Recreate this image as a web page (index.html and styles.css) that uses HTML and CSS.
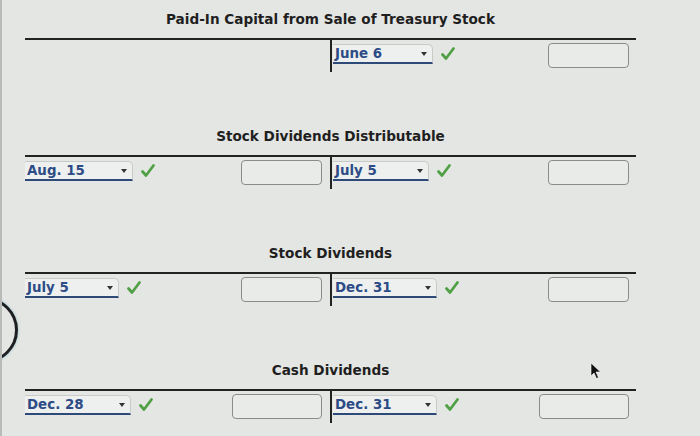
FILE: index.html
```html
<!DOCTYPE html>
<html>
<head>
<meta charset="utf-8">
<link rel="stylesheet" href="styles.css">
</head>
<body>
<div class="page">
  <section class="acct">
    <div class="title">Paid-In Capital from Sale of Treasury Stock</div>
    <div class="t">
      <div class="col left"></div>
      <div class="col right">
        <div class="entry">
          <div class="sel w100">June 6<span class="arr"></span></div>
          <svg class="chk" viewBox="0 0 14 14"><path d="M1.5 7.5 L5 11.5 L12.5 1.5"/></svg>
        </div>
        <div class="box"></div>
      </div>
    </div>
  </section>

  <section class="acct">
    <div class="title">Stock Dividends Distributable</div>
    <div class="t">
      <div class="col left">
        <div class="entry">
          <div class="sel w108">Aug. 15<span class="arr"></span></div>
          <svg class="chk" viewBox="0 0 14 14"><path d="M1.5 7.5 L5 11.5 L12.5 1.5"/></svg>
        </div>
        <div class="box"></div>
      </div>
      <div class="col right">
        <div class="entry">
          <div class="sel w96">July 5<span class="arr"></span></div>
          <svg class="chk" viewBox="0 0 14 14"><path d="M1.5 7.5 L5 11.5 L12.5 1.5"/></svg>
        </div>
        <div class="box"></div>
      </div>
    </div>
  </section>

  <section class="acct">
    <div class="title">Stock Dividends</div>
    <div class="t">
      <div class="col left">
        <div class="entry">
          <div class="sel w94">July 5<span class="arr"></span></div>
          <svg class="chk" viewBox="0 0 14 14"><path d="M1.5 7.5 L5 11.5 L12.5 1.5"/></svg>
        </div>
        <div class="box"></div>
      </div>
      <div class="col right">
        <div class="entry">
          <div class="sel w104">Dec. 31<span class="arr"></span></div>
          <svg class="chk" viewBox="0 0 14 14"><path d="M1.5 7.5 L5 11.5 L12.5 1.5"/></svg>
        </div>
        <div class="box"></div>
      </div>
    </div>
  </section>

  <section class="acct">
    <div class="title">Cash Dividends</div>
    <div class="t">
      <div class="col left">
        <div class="entry">
          <div class="sel w106">Dec. 28<span class="arr"></span></div>
          <svg class="chk" viewBox="0 0 14 14"><path d="M1.5 7.5 L5 11.5 L12.5 1.5"/></svg>
        </div>
        <div class="box wide"></div>
      </div>
      <div class="col right">
        <div class="entry">
          <div class="sel w104">Dec. 31<span class="arr"></span></div>
          <svg class="chk" viewBox="0 0 14 14"><path d="M1.5 7.5 L5 11.5 L12.5 1.5"/></svg>
        </div>
        <div class="box wide"></div>
      </div>
    </div>
  </section>
</div>
<div class="ring"></div>
<svg class="cursor" viewBox="0 0 12 18"><path d="M1 1 L1 14 L4 11 L6.5 16.5 L8.5 15.5 L6 10 L10.5 10 Z"/></svg>
</body>
</html>
```

FILE: styles.css
```css
html, body {
  margin: 0;
  padding: 0;
}
body {
  width: 700px;
  height: 436px;
  overflow: hidden;
  position: relative;
  background: #e4e6e3;
  border-left: 2px solid #b9bbb8;
  box-sizing: border-box;
  font-family: "DejaVu Sans", Verdana, sans-serif;
  font-weight: bold;
  color: #222;
}
.page {
  display: flex;
  flex-direction: column;
  gap: 55px;
  padding: 10px 0 0 23px;
  width: 611px;
}
.title {
  text-align: center;
  font-size: 13.6px;
  line-height: 18px;
  height: 18px;
  margin-bottom: 10px;
  color: #1f1f1f;
}
.t {
  display: flex;
  border-top: 2px solid #222;
}
.col {
  display: flex;
  justify-content: space-between;
  align-items: flex-start;
  height: 32px;
  box-sizing: border-box;
}
.left {
  width: 305px;
  padding-right: 8px;
}
.right {
  width: 306px;
  border-left: 2px solid #222;
  padding-left: 1px;
  padding-right: 7px;
}
.entry {
  display: flex;
  align-items: center;
  gap: 8px;
  margin-top: 4px;
}
.sel {
  position: relative;
  box-sizing: border-box;
  height: 20px;
  padding-left: 2px;
  font-size: 13.4px;
  line-height: 18px;
  color: #2d4c86;
  background: #eef0ef;
  border: 1px solid #c9cbc9;
  border-left: none;
  border-bottom: 2px solid #2e4a78;
  border-radius: 0 5px 0 0;
}
.w94 { width: 94px; }
.w96 { width: 96px; }
.w100 { width: 100px; }
.w104 { width: 104px; }
.w106 { width: 106px; }
.w108 { width: 108px; }
.arr {
  position: absolute;
  right: 5px;
  top: 7px;
  width: 0;
  height: 0;
  border-left: 3px solid transparent;
  border-right: 3px solid transparent;
  border-top: 4px solid #333;
}
.chk {
  width: 14px;
  height: 14px;
}
.chk path {
  fill: none;
  stroke: #4f9f44;
  stroke-width: 2.7;
  stroke-linecap: round;
  stroke-linejoin: round;
}
.box {
  width: 81px;
  height: 25px;
  box-sizing: border-box;
  margin-top: 3px;
  border: 1.5px solid #8a8c8a;
  border-radius: 4px;
  background: #e9ebe9;
}
.box.wide {
  width: 90px;
}
.ring {
  position: absolute;
  left: -50px;
  top: 297px;
  width: 60px;
  height: 60px;
  border: 3px solid #1d1f22;
  border-radius: 50%;
  box-shadow: 0 0 3px #8fc3d0;
}
.cursor {
  position: absolute;
  left: 588px;
  top: 362px;
  width: 12px;
  height: 18px;
}
.cursor path {
  fill: #111;
  stroke: #fff;
  stroke-width: 0.6;
}
```
